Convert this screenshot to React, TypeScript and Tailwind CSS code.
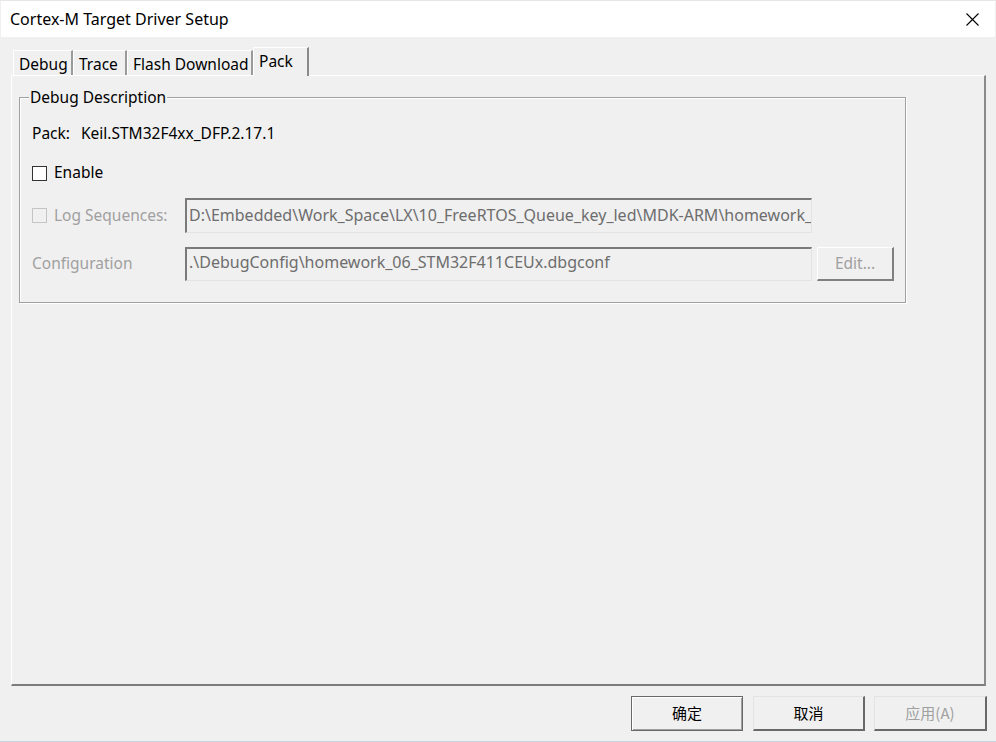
import React from "react";

const latin = "font-['Noto_Sans','Noto_Sans_CJK_SC',sans-serif]";
const cjk = "font-['Noto_Sans_CJK_SC',sans-serif]";

const tabs = [
  { label: "Debug", width: "w-[60px]", active: false },
  { label: "Trace", width: "w-[54px]", active: false },
  { label: "Flash Download", width: "w-[126px]", active: false },
  { label: "Pack", width: "w-[56px]", active: true },
];

function Checkbox({ disabled = false }: { disabled?: boolean }) {
  return (
    <span
      className={
        disabled
          ? "h-[15px] w-[15px] shrink-0 border border-[#c4c4c4] bg-[#f0f0f0]"
          : "h-[15px] w-[15px] shrink-0 border border-[#333333] bg-white"
      }
    />
  );
}

function Field({ text, lead }: { text: string; lead: string }) {
  return (
    <div
      className={`w-[627px] shrink-0 overflow-hidden whitespace-nowrap border-t-[2px] border-l-[2px] border-t-[#7a7a7a] border-l-[#7a7a7a] border-b border-r border-b-[#e3e3e3] border-r-[#e3e3e3] pl-[2px] text-[16px] ${lead} text-[#6d6d6d]`}
    >
      {text}
    </div>
  );
}

function DialogButton({ label, variant }: { label: string; variant: "default" | "normal" | "disabled" }) {
  const base = `flex h-[35px] items-center justify-center text-[15px] ${cjk}`;
  if (variant === "default") {
    return (
      <div className={`${base} w-[112px] border border-[#696969] text-black shadow-[inset_1px_1px_0_#ffffff,inset_-1px_-1px_0_#a0a0a0]`}>
        {label}
      </div>
    );
  }
  return (
    <div
      className={`${base} ${variant === "disabled" ? "w-[113px] text-[#a0a0a0]" : "w-[112px] text-black"} border-t border-l border-b-[2px] border-r-[2px] border-t-[#e3e3e3] border-l-[#e3e3e3] border-b-[#696969] border-r-[#696969]`}
    >
      {label}
    </div>
  );
}

export default function App() {
  return (
    <div className={`flex h-[742px] w-[996px] flex-col overflow-hidden bg-[#f0f0f0] ${latin}`}>
      <div className="h-[1px] bg-[#e6e6e6]" />

      {/* title bar */}
      <div className="mx-[1px] flex h-[36px] items-center justify-between bg-white pl-[9px] pr-[15px]">
        <span className="text-[16px] text-black">Cortex-M Target Driver Setup</span>
        <svg width="13" height="13" viewBox="0 0 13 13" className="mr-[1px]">
          <path d="M0.5 0.5 L12.5 12.5 M12.5 0.5 L0.5 12.5" stroke="#000" strokeWidth="1.1" />
        </svg>
      </div>

      <div className="flex flex-1 flex-col pl-[11px] pr-[10px]">
        {/* tab strip */}
        <div className="mt-[11px] flex h-[27px] items-end pl-[2px] text-[15.5px]">
          {tabs.map((t) =>
            t.active ? (
              <div
                key={t.label}
                className={`relative z-10 -mb-[1px] flex h-[29px] ${t.width} items-start border-t border-l border-t-white border-l-white border-r-[2px] border-r-[#8a8a8a] bg-[#f0f0f0] pl-[5px] pt-[3px] leading-[20px] text-black`}
              >
                {t.label}
              </div>
            ) : (
              <div
                key={t.label}
                className={`flex h-[25px] ${t.width} items-center border-t border-l border-t-white border-l-white border-r-[2px] border-r-[#9a9a9a] pl-[5px] pt-[2px] leading-[20px] text-black`}
              >
                {t.label}
              </div>
            )
          )}
        </div>

        {/* tab panel */}
        <div className="h-[611px] border-t border-l border-t-white border-l-white border-r-[2px] border-b-[2px] border-r-[#8a8a8a] border-b-[#7c7c7c] pl-[7px] pt-[21px] text-[15.5px]">
          <div className="relative h-[206px] w-[887px] border border-[#a0a0a0] pl-[12px] pt-[26px] shadow-[1px_1px_0_#ffffff,inset_1px_1px_0_#ffffff]">
            <span className="absolute -top-[11px] left-[9px] bg-[#f0f0f0] px-[1px] leading-[20px] text-black">
              Debug Description
            </span>

            <div className="flex h-[20px] items-center text-black">
              <span className="w-[49px]">Pack:</span>
              <span>Keil.STM32F4xx_DFP.2.17.1</span>
            </div>

            <div className="mt-[19px] flex h-[20px] items-center gap-[7px] text-black">
              <Checkbox />
              <span>Enable</span>
            </div>

            <div className="mt-[15px] flex h-[35px] items-center">
              <div className="flex w-[153px] items-center gap-[7px] text-[#a0a0a0]">
                <Checkbox disabled />
                <span>Log Sequences:</span>
              </div>
              <div className="h-[35px]">
                <Field
                  lead="h-[35px] leading-[30px]"
                  text="D:\Embedded\Work_Space\LX\10_FreeRTOS_Queue_key_led\MDK-ARM\homework_06_STM32F411CEUx"
                />
              </div>
            </div>

            <div className="mt-[14px] flex h-[34px] items-stretch">
              <span className="flex w-[153px] items-center text-[#a0a0a0]">Configuration</span>
              <Field lead="leading-[26px]" text=".\DebugConfig\homework_06_STM32F411CEUx.dbgconf" />
              <div className="ml-[5px] flex w-[77px] items-center justify-center border-t border-l border-t-white border-l-white border-b-[2px] border-r-[2px] border-b-[#808080] border-r-[#808080] text-[#a0a0a0]">
                Edit...
              </div>
            </div>
          </div>
        </div>

        {/* dialog buttons */}
        <div className="-mr-[1px] mt-[10px] flex justify-end">
          <DialogButton label="确定" variant="default" />
          <div className="w-[10px]" />
          <DialogButton label="取消" variant="normal" />
          <div className="w-[9px]" />
          <DialogButton label="应用(A)" variant="disabled" />
        </div>
      </div>

      <div className="h-[1px] bg-[#c5d3e2]" />
    </div>
  );
}
